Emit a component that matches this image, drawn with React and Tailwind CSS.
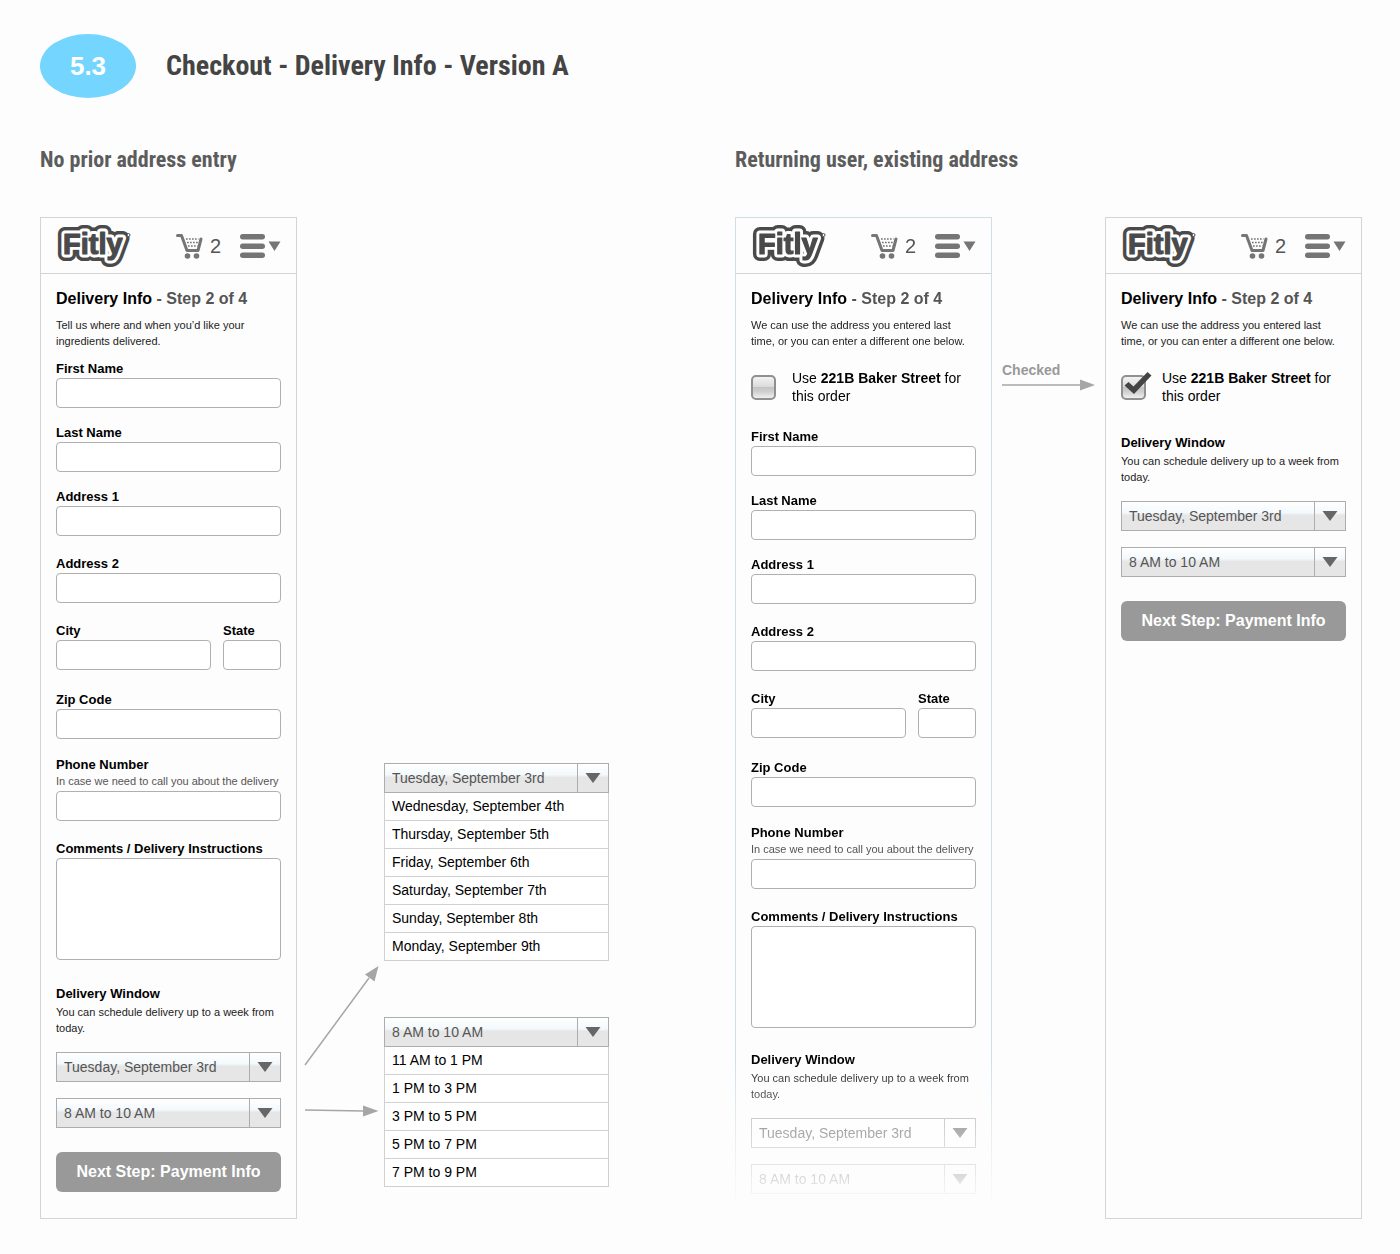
import { useId } from "react";

const DAYS = [
  "Wednesday, September 4th",
  "Thursday, September 5th",
  "Friday, September 6th",
  "Saturday, September 7th",
  "Sunday, September 8th",
  "Monday, September 9th",
];
const TIMES = ["11 AM to 1 PM", "1 PM to 3 PM", "3 PM to 5 PM", "5 PM to 7 PM", "7 PM to 9 PM"];
const FIRST_DAY = "Tuesday, September 3rd";
const FIRST_TIME = "8 AM to 10 AM";

function Logo() {
  const text = {
    x: 7,
    y: 27,
    fontFamily: '"Liberation Sans", Arial, sans-serif',
    fontWeight: 700,
    fontSize: 29,
    strokeLinejoin: "round",
  };
  return (
    <svg width="75" height="42" viewBox="0 0 75 42" className="overflow-visible" role="img" aria-label="Fitly">
      <text {...text} fill="#4a4a4a" stroke="#4a4a4a" strokeWidth="14">Fitly</text>
      <text {...text} fill="#fff" stroke="#fff" strokeWidth="7">Fitly</text>
      <text {...text} fill="#4a4a4a" stroke="#4a4a4a" strokeWidth="1.200">Fitly</text>
      <circle cx="72.500" cy="8" r="1.500" fill="#fff" stroke="#4a4a4a" />
    </svg>
  );
}

function CartIcon() {
  return (
    <svg width="27" height="26" viewBox="0 0 27 26" fill="none" stroke="#757575" aria-hidden="true">
      <path d="M1.500 2.500H5.500L11 17.500H22L25 6" strokeWidth="3" strokeLinecap="round" strokeLinejoin="round" />
      <path d="M10 6H22.500M11 9.500H22M12 13H21.500" strokeWidth="1.700" strokeDasharray="1.700 1.300" />
      <circle cx="11.500" cy="23" r="2.800" fill="#757575" stroke="none" />
      <circle cx="20.500" cy="23" r="2.800" fill="#757575" stroke="none" />
    </svg>
  );
}

function MenuIcon() {
  return (
    <svg width="41" height="26" viewBox="0 0 41 26" fill="#757575" aria-hidden="true">
      <rect x="0" y="1" width="25" height="5.500" rx="2.750" />
      <rect x="0" y="10.500" width="25" height="5.500" rx="2.750" />
      <rect x="0" y="19.500" width="25" height="5.500" rx="2.750" />
      <path d="M28.500 8.500H40.500L34.500 18Z" />
    </svg>
  );
}

function Panel({ className = "", children }) {
  return (
    <section className={"min-w-0 border " + className}>
      <header className="flex h-14 items-center border-b border-[#d4d4d6] px-[15px]">
        <a href="#home" className="block pt-1"><Logo /></a>
        <a href="#cart" className="ml-auto flex items-center gap-[7px] text-xl text-[#555]" aria-label="Cart, 2 items">
          <CartIcon />
          <span>2</span>
        </a>
        <button type="button" className="ml-[19px]" aria-label="Menu"><MenuIcon /></button>
      </header>
      <div className="px-[15px] pt-[13px] pb-6">
        <h3 className="text-base leading-6 font-bold whitespace-nowrap text-black">
          Delivery Info <span className="text-[#555]">- Step 2 of 4</span>
        </h3>
        {children}
      </div>
    </section>
  );
}

function Note({ className = "", children }) {
  return <p className={"text-[11px] leading-4 text-[#222] " + className}>{children}</p>;
}

function Field({ label, hint, multiline, className = "" }) {
  const id = useId();
  const box = "mt-px block w-full min-w-0 rounded-[4px] border border-[#b0b0b0] bg-white px-2 text-sm ";
  return (
    <div className={"min-w-0 " + className}>
      <label htmlFor={id} className="block text-[13px] leading-4 font-bold whitespace-nowrap text-black">{label}</label>
      {hint && <p className="pb-px text-[11px] leading-4 whitespace-nowrap text-[#555]">{hint}</p>}
      {multiline ? (
        <textarea id={id} className={box + "h-[102px] resize-none"} />
      ) : (
        <input id={id} type="text" className={box + "h-[30px]"} />
      )}
    </div>
  );
}

function Picker({ label, value, options, plain, className = "" }) {
  const fill = plain ? "bg-white" : "bg-[linear-gradient(#fff,#f3f9fc_38%,#e6e6e6_48%,#e6e6e6)]";
  return (
    <div className={"relative h-[30px] border border-[#adadad] " + fill + " " + className}>
      <select
        aria-label={label}
        defaultValue={value}
        className="block h-full w-full appearance-none bg-transparent pr-8 pl-[7px] text-sm text-[#555]"
      >
        <option>{value}</option>
        {options.map((o) => <option key={o}>{o}</option>)}
      </select>
      <span className="pointer-events-none absolute inset-y-0 right-0 flex w-[31px] items-center justify-center border-l border-[#adadad]">
        <svg width="16" height="10" viewBox="0 0 16 10" fill="#666" aria-hidden="true"><path d="M0.500 0H15.500L8 10Z" /></svg>
      </span>
    </div>
  );
}

function OpenPicker({ label, value, options }) {
  return (
    <div>
      <Picker label={label} value={value} options={options} />
      <ul role="listbox" aria-label={label} className="border-x border-[#d0d0d0] bg-white">
        {options.map((o) => (
          <li key={o} role="option" aria-selected="false" className="h-7 border-b border-[#d0d0d0] pl-[7px] text-sm leading-[26px] text-black">{o}</li>
        ))}
      </ul>
    </div>
  );
}

function SavedAddress({ checked }) {
  const id = useId();
  return (
    <div className="mt-5 flex items-center gap-4">
      <span className="relative block size-[25px] shrink-0">
        <input
          id={id}
          type="checkbox"
          defaultChecked={checked}
          className="peer block size-full appearance-none rounded-[5px] border-2 border-[#909090] bg-[linear-gradient(#f2f2f2,#dcdcdc_45%,#c4c4c4_50%,#cfcfcf_70%,#f0f0f0)]"
        />
        <svg
          width="30" height="28" viewBox="0 0 30 28" fill="#444" aria-hidden="true"
          className="pointer-events-none absolute -top-1 left-0.5 hidden peer-checked:block"
        >
          <path d="M1.500 14.500L5.500 11L10.500 15.500L24.500 1L28.500 4.500L11 23Z" />
        </svg>
      </span>
      <label htmlFor={id} className="text-sm leading-[18px] text-black">
        Use <b>221B Baker Street</b> for<br />this order
      </label>
    </div>
  );
}

function AddressForm({ className = "" }) {
  return (
    <div className={className}>
      <Field label="First Name" />
      <Field label="Last Name" className="mt-[17px]" />
      <Field label="Address 1" className="mt-[17px]" />
      <Field label="Address 2" className="mt-5" />
      <div className="mt-5 grid grid-cols-[155fr_58fr] gap-3">
        <Field label="City" />
        <Field label="State" />
      </div>
      <Field label="Zip Code" className="mt-[22px]" />
      <Field label="Phone Number" hint="In case we need to call you about the delivery" className="mt-[18px]" />
      <Field label="Comments / Delivery Instructions" multiline className="mt-5" />
    </div>
  );
}

function DeliveryWindow({ plain, className = "" }) {
  return (
    <div className={className}>
      <h4 className="text-[13px] leading-4 font-bold text-black">Delivery Window</h4>
      <Note className="mt-0.5">You can schedule delivery up to a week from today.</Note>
      <Picker label="Delivery day" value={FIRST_DAY} options={DAYS} plain={plain} className="mt-4" />
      <Picker label="Delivery time" value={FIRST_TIME} options={TIMES} plain={plain} className="mt-4" />
    </div>
  );
}

function NextButton() {
  return (
    <button type="button" className="mt-6 block h-10 w-full rounded-md bg-[#999] text-base font-bold whitespace-nowrap text-white">
      Next Step: Payment Info
    </button>
  );
}

export default function App() {
  return (
    <main className="min-h-screen bg-[#fdfdfd] pt-[34px] pr-[38px] pb-[35px] pl-10 font-['Liberation_Sans',Arial,sans-serif]">
      <header className="flex items-center gap-[30px]">
        <span className="flex h-16 w-24 items-center justify-center rounded-[50%] bg-[#74d5ff] text-[26px] font-bold text-white">5.3</span>
        <h1 className="font-['Liberation_Sans_Narrow','Roboto_Condensed','Open_Sans_Condensed',sans-serif] text-[28px] leading-9 font-bold text-[#444]">
          Checkout - Delivery Info - Version A
        </h1>
      </header>

      <div className="mt-12 grid grid-cols-[257fr_87fr_225fr_126fr_257fr_113fr_257fr]">
        <h2 className="col-span-4 mb-[43px] font-['Liberation_Sans_Narrow','Roboto_Condensed',sans-serif] text-[22px] leading-7 font-bold text-[#5c5c5c]">
          No prior address entry
        </h2>
        <h2 className="col-span-3 mb-[43px] font-['Liberation_Sans_Narrow','Roboto_Condensed',sans-serif] text-[22px] leading-7 font-bold text-[#5c5c5c]">
          Returning user, existing address
        </h2>

        <Panel className="border-[#d4d4d6]">
          <Note className="mt-1.5">Tell us where and when you’d like your ingredients delivered.</Note>
          <AddressForm className="mt-3" />
          <DeliveryWindow className="mt-[26px]" />
          <NextButton />
        </Panel>

        <div className="flex min-w-0 items-end justify-center pb-[99px]">
          <svg width="76" height="156" viewBox="0 0 76 156" fill="#a6a6a6" stroke="#a6a6a6" aria-hidden="true">
            <path d="M2 101L66 14" strokeWidth="1.500" />
            <path d="M75.500 2L62 10.500L71.500 17.500Z" stroke="none" />
            <path d="M2 146L60 147" strokeWidth="1.500" />
            <path d="M75.500 147L60 141.500V152.500Z" stroke="none" />
          </svg>
        </div>

        <div className="flex min-w-0 flex-col justify-end gap-14 pb-8">
          <OpenPicker label="Delivery day choices" value={FIRST_DAY} options={DAYS} />
          <OpenPicker label="Delivery time choices" value={FIRST_TIME} options={TIMES} />
        </div>

        <Panel className="col-start-5 border-[#cfdfe6] [mask-image:linear-gradient(black_84%,transparent_99%)]">
          <Note className="mt-1.5">We can use the address you entered last time, or you can enter a different one below.</Note>
          <SavedAddress />
          <AddressForm className="mt-6" />
          <DeliveryWindow plain className="mt-6" />
        </Panel>

        <div className="flex min-w-0 flex-col items-center pt-36">
          <div className="w-[93px]">
            <p className="text-sm leading-[18px] font-bold text-[#999]">Checked</p>
            <svg width="93" height="12" viewBox="0 0 93 12" fill="#a6a6a6" stroke="#a6a6a6" aria-hidden="true">
              <path d="M0 6H80" strokeWidth="1.500" />
              <path d="M93 6L78 0.500V11.500Z" stroke="none" />
            </svg>
          </div>
        </div>

        <Panel className="border-[#d4d4d6]">
          <Note className="mt-1.5">We can use the address you entered last time, or you can enter a different one below.</Note>
          <SavedAddress checked />
          <DeliveryWindow className="mt-[30px]" />
          <NextButton />
        </Panel>
      </div>
    </main>
  );
}
